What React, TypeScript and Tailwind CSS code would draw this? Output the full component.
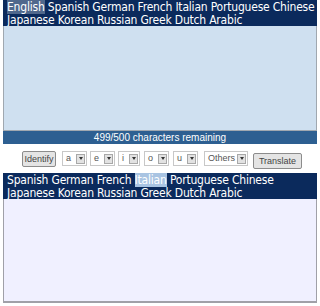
import React from 'react';

const langs1 = ['English', 'Spanish', 'German', 'French', 'Italian', 'Portuguese', 'Chinese', 'Japanese', 'Korean', 'Russian', 'Greek', 'Dutch', 'Arabic'];
const langs2 = ['Spanish', 'German', 'French', 'Italian', 'Portuguese', 'Chinese', 'Japanese', 'Korean', 'Russian', 'Greek', 'Dutch', 'Arabic'];

function LangBar({ items, active, activeClass }: { items: string[]; active: string; activeClass: string }) {
	return (
		<div className="bg-[#0b2a5c] text-white text-[12px] leading-[13px] tracking-[-0.2px] pl-[4px] pt-[1px] h-[26px] whitespace-nowrap overflow-hidden" style={{ fontFamily: '"DejaVu Sans Condensed", "DejaVu Sans", Verdana, sans-serif' }}>
			{items.map((l, i) => (
				<React.Fragment key={l}>
					<span className={l === active ? activeClass : ''}>{l}</span>
					{l === 'Chinese' ? <br /> : i < items.length - 1 ? ' ' : ''}
				</React.Fragment>
			))}
		</div>
	);
}

function Pick({ label, w }: { label: string; w: string }) {
	return (
		<div className={`flex items-center h-[15px] border border-[#c8c8c8] bg-white ${w}`}>
			<span className="flex-1 pl-[3px] text-[9px] text-[#555]">{label}</span>
			<span className="w-[9px] h-[10px] mr-[1px] bg-[#e2e2e2] border border-[#a8a8a8] flex items-center justify-center">
				<span className="block w-0 h-0 border-l-[2px] border-r-[2px] border-t-[3px] border-l-transparent border-r-transparent border-t-[#333]" />
			</span>
		</div>
	);
}

function Btn({ label, w }: { label: string; w: string }) {
	return (
		<button className={`h-[16px] ${w} text-[9px] leading-[12px] text-[#444] bg-[#e4e4e4] border border-[#8c8c8c] rounded-[2px]`}>
			{label}
		</button>
	);
}

export default function App() {
	return (
		<div className="w-[320px] h-[306px] bg-white px-[3px]" style={{ fontFamily: '"Liberation Sans", Arial, sans-serif' }}>
			{/* 入力側 */}
			<LangBar items={langs1} active="English" activeClass="bg-[#50688c]" />
			<div className="h-[105px] bg-[#cfe0f0] border border-[#a0a8b0] border-t-0" />
			<div className="h-[13px] bg-[#2d5f91] text-white text-[10px] leading-[13px] text-center">
				499/500 characters remaining
			</div>
			{/* ツールバー */}
			<div className="h-[29px] flex items-center pl-[19px]">
				<Btn label="Identify" w="w-[34px]" />
				<div className="ml-[6px]"><Pick label="a" w="w-[25px]" /></div>
				<div className="ml-[3px]"><Pick label="e" w="w-[25px]" /></div>
				<div className="ml-[3px]"><Pick label="i" w="w-[22px]" /></div>
				<div className="ml-[4px]"><Pick label="o" w="w-[25px]" /></div>
				<div className="ml-[4px]"><Pick label="u" w="w-[25px]" /></div>
				<div className="ml-[6px]"><Pick label="Others" w="w-[44px]" /></div>
				<div className="ml-[5px]"><Btn label="Translate" w="w-[49px]" /></div>
			</div>
			{/* 出力側 */}
			<LangBar items={langs2} active="Italian" activeClass="bg-[#a9c4e2]" />
			<div className="h-[104px] bg-[#f0f0ff] border border-[#a0a0a8] border-t-0 border-b-2" />
		</div>
	);
}
